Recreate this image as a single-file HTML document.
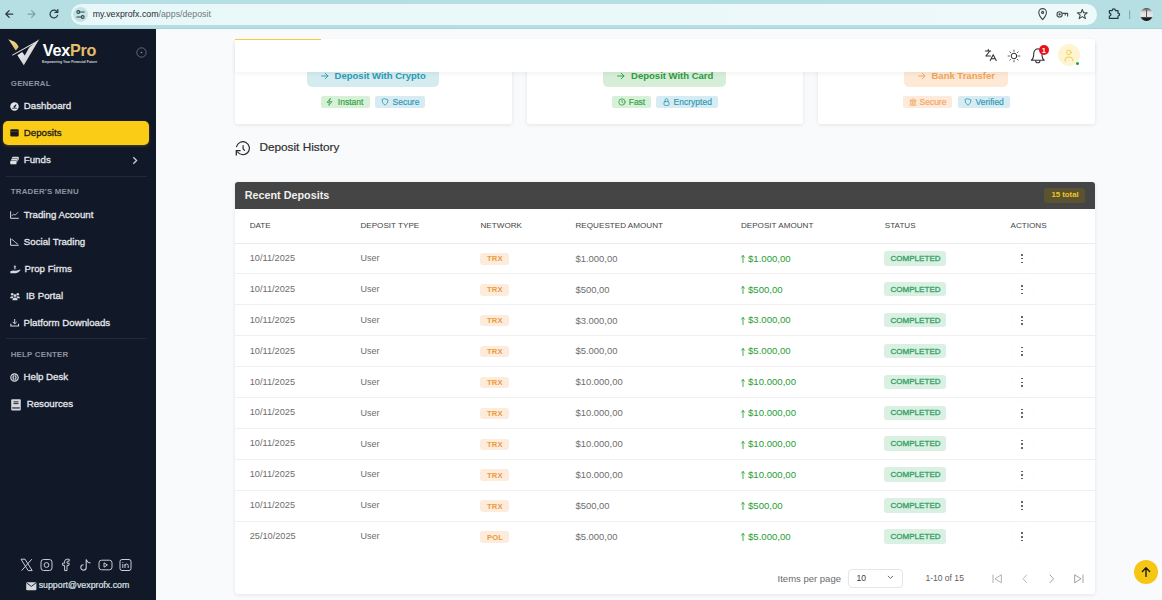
<!DOCTYPE html>
<html><head><meta charset="utf-8">
<style>
*{box-sizing:border-box;margin:0;padding:0}
html,body{width:1162px;height:600px;overflow:hidden;background:#f9fafc;font-family:"Liberation Sans",sans-serif;position:relative}
.abs{position:absolute}
.t{position:absolute;white-space:nowrap;line-height:1}
/* browser bar */
#bar{left:0;top:0;width:1162px;height:29px;background:#b6dfe3;border-bottom:1px solid #a9d3d8}
#pill{left:71px;top:4px;width:1026px;height:20.5px;border-radius:11px;background:linear-gradient(90deg,#e8f7f9,#eef9fa)}
/* sidebar */
#side{left:0;top:29px;width:156px;height:571px;background:#111827}
.sec{font-size:7.9px;font-weight:700;color:#8b93a0;letter-spacing:0.2px}
.nav{font-size:9.7px;color:#e5e7eb;-webkit-text-stroke:0.3px currentColor}
.div{left:6px;width:141px;height:1px;background:#212a3b}
/* main */
.card{background:#fff;border-radius:3px;box-shadow:0 1px 4px rgba(0,0,0,0.09)}
.btn{border-radius:5px;font-weight:700;font-size:9.5px}
.chip{height:12px;border-radius:2px;font-size:7.9px;font-weight:700}
.th{font-size:8.1px;color:#444;letter-spacing:0.1px}
.td{font-size:9.3px;color:#6b6b6b}
.net{height:12px;border-radius:3px;background:#fde9d6;color:#ee8a2e;font-size:8px;font-weight:700}
.cmp{height:14.5px;border-radius:3px;background:#d9f0e2;color:#2f9e60;font-size:7.9px;font-weight:700}
.grn{font-size:9.4px;color:#22a035}
.rowb{left:235px;width:860px;height:1px;background:#efefef}
</style></head><body>

<!-- Browser bar -->
<div id="bar" class="abs"></div>
<div id="pill" class="abs"></div>
<div class="abs" style="left:73px;top:7px;width:15px;height:15px;border-radius:50%;background:#c3e3e7"></div>

<svg class="abs" style="left:0;top:0" width="70" height="29" viewBox="0 0 70 29" fill="none" stroke-linecap="round" stroke-linejoin="round">
  <path d="M12.8 14 H5.8 M9.2 10.6 L5.8 14 L9.2 17.4" stroke="#2b3a3c" stroke-width="1.25"/>
  <path d="M28 14 H35 M31.6 10.6 L35 14 L31.6 17.4" stroke="#7fa3a7" stroke-width="1.25"/>
  <path d="M57.4 12.2 A3.9 3.9 0 1 0 57.6 15.4" stroke="#2b3a3c" stroke-width="1.25"/>
  <path d="M57.8 9.6 V12.4 H55" stroke="#2b3a3c" stroke-width="1.25"/>
</svg>
<svg class="abs" style="left:73px;top:7px" width="15" height="15" viewBox="0 0 15 15" fill="none" stroke="#2f4548" stroke-width="1.1" stroke-linecap="round">
  <circle cx="5.3" cy="5" r="1.4"/><path d="M7.4 5 H11.2"/>
  <path d="M3.8 10 H7.6"/><circle cx="9.7" cy="10" r="1.4"/>
</svg>
<svg class="abs" style="left:1034px;top:5px" width="130" height="20" viewBox="1034 5 130 20" fill="none" stroke="#3c4b4d" stroke-width="1.1" stroke-linejoin="round">
  <path d="M1042.6 19.6 Q1038.8 15.2 1038.8 12.4 A3.8 3.8 0 0 1 1046.4 12.4 Q1046.4 15.2 1042.6 19.6 Z"/><circle cx="1042.6" cy="12.4" r="1"/>
  <circle cx="1059.6" cy="14.4" r="2.6"/><circle cx="1059.6" cy="14.4" r="0.6" fill="#3c4b4d"/><path d="M1062.2 13.4 H1067.6 V16.6 M1065.2 13.4 V15.6"/>
  <path d="M1082.3 9.4 L1083.6 12.8 L1087.2 12.9 L1084.4 15.1 L1085.4 18.6 L1082.3 16.6 L1079.2 18.6 L1080.2 15.1 L1077.4 12.9 L1081 12.8 Z"/>
  <path d="M1109.4 10.6 H1112.2 Q1112.2 8.8 1113.8 8.8 Q1115.4 8.8 1115.4 10.6 H1118 V13.2 Q1119.6 13.2 1119.6 14.6 Q1119.6 16 1118 16 V18.4 H1109.4 V16 Q1111 16 1111 14.6 Q1111 13.2 1109.4 13.2 Z" stroke="#26383b" stroke-width="1.2"/>
  <path d="M1129.7 10.4 V19" stroke="#6fa9b0" stroke-width="1"/>
</svg>
<div class="abs" style="left:1140px;top:8px;width:13px;height:13px;border-radius:50%;background:linear-gradient(180deg,#3b3b3b 0%,#dcdcdc 30%,#e8e8e8 65%,#222 75%,#111 100%);overflow:hidden"><div class="abs" style="left:6px;top:2px;width:1.2px;height:8px;background:#555"></div></div>
<div class="t" style="left:92.7px;top:10px;font-size:8.8px;color:#1f2a2c">my.vexprofx.com<span style="color:#6d7a7c">/apps/deposit</span></div>

<!-- Sidebar -->
<div id="side" class="abs"></div>
<!-- Sidebar content -->
<svg class="abs" style="left:0;top:29px" width="156" height="50" viewBox="0 29 156 50">
  <defs>
    <linearGradient id="gold" x1="0" y1="0" x2="0" y2="1"><stop offset="0" stop-color="#f5df9c"/><stop offset="1" stop-color="#dcb865"/></linearGradient>
    <linearGradient id="silv" x1="0" y1="0" x2="1" y2="1"><stop offset="0" stop-color="#ffffff"/><stop offset="1" stop-color="#b9bcc4"/></linearGradient>
  </defs>
  <path d="M8.4 39.3 L14.6 41.8 Q17.6 44 18.7 47 L15.8 50.4 Q13.6 47.6 12.2 45 Z" fill="url(#gold)"/>
  <path d="M39.4 39.1 L23.8 65.3 L17.4 55.3 L22.2 52 L24.8 55.6 L29.2 47.6 Z" fill="url(#silv)"/>
  <path d="M11.8 55 L37.6 40.6 L38.2 41.4 L12.8 55.4 Z" fill="#d9dbe2"/>
  <path d="M39.4 39.1 L36 42.8 L37.6 40.8 Z" fill="#d5a94e"/>
</svg>
<div class="t" style="left:42.8px;top:41.6px;font-size:16.2px;font-weight:700;letter-spacing:-0.25px;color:#fff">Vex<span style="color:#e3bf6a">Pro</span></div>
<div class="t" style="left:42px;top:60.5px;font-size:3.35px;font-weight:700;color:#d6d8de;letter-spacing:0">Empowering Your Financial Future</div>
<svg class="abs" style="left:136px;top:47px" width="11" height="11" viewBox="0 0 11 11"><circle cx="5.5" cy="5.5" r="4.7" fill="none" stroke="#6b7280" stroke-width="0.9"/><circle cx="5.5" cy="5.5" r="0.8" fill="#8b92a0"/></svg>

<div class="t sec" style="left:10.8px;top:80.2px">GENERAL</div>
<svg class="abs" style="left:10px;top:102px" width="9" height="9" viewBox="0 0 9 9"><circle cx="4.5" cy="4.5" r="4.2" fill="#e5e7eb"/><path d="M4.5 4.7 L6.3 2.6" stroke="#111827" stroke-width="1.1"/><circle cx="4.5" cy="4.8" r="1" fill="#111827"/><path d="M2 6.3 h5" stroke="#111827" stroke-width="0.7"/></svg>
<div class="t nav" style="left:23.8px;top:101.3px">Dashboard</div>

<div class="abs" style="left:3px;top:121.3px;width:146px;height:23.4px;border-radius:5px;background:#facc15;box-shadow:0 1px 3px rgba(250,204,21,0.25)"></div>
<svg class="abs" style="left:10px;top:129px" width="9" height="8" viewBox="0 0 9 8"><rect x="0.3" y="0.3" width="8.4" height="7.2" rx="1.2" fill="#1a1a1a"/><rect x="0.3" y="2" width="8.4" height="0.8" fill="#5a4a10"/></svg>
<div class="t nav" style="left:23.8px;top:128.3px;color:#1b1b1b">Deposits</div>

<svg class="abs" style="left:10px;top:156px" width="9" height="9" viewBox="0 0 9 9"><rect x="2" y="0.8" width="6.8" height="3.6" rx="0.8" fill="#d6d8de"/><rect x="1" y="2.6" width="6.8" height="3.6" rx="0.8" fill="#e5e7eb" stroke="#111827" stroke-width="0.5"/><rect x="0" y="4.6" width="6.8" height="3.8" rx="0.8" fill="#e5e7eb" stroke="#111827" stroke-width="0.5"/></svg>
<div class="t nav" style="left:23.8px;top:155.3px">Funds</div>
<svg class="abs" style="left:132px;top:156px" width="6" height="9" viewBox="0 0 6 9"><path d="M1.3 1.2 L4.6 4.5 L1.3 7.8" fill="none" stroke="#c9ccd3" stroke-width="1.3"/></svg>

<div class="abs div" style="top:176.3px"></div>
<div class="t sec" style="left:10.8px;top:188.2px">TRADER&#39;S MENU</div>

<svg class="abs" style="left:9.5px;top:210.5px" width="9" height="8" viewBox="0 0 9 8"><path d="M0.6 0.3 V7.3 H8.8" fill="none" stroke="#d6d8de" stroke-width="1"/><path d="M1.8 5 L3.6 3 L5 4.2 L8.2 1.2" fill="none" stroke="#d6d8de" stroke-width="0.8"/></svg>
<div class="t nav" style="left:23.8px;top:209.5px">Trading Account</div>

<svg class="abs" style="left:9.5px;top:237.5px" width="9" height="8" viewBox="0 0 9 8"><path d="M0.6 0.3 V7.3 H8.8" fill="none" stroke="#d6d8de" stroke-width="1"/><path d="M1.6 1.5 L3.2 2.2 L5.8 4.8 L7.8 6" fill="none" stroke="#d6d8de" stroke-width="0.9"/></svg>
<div class="t nav" style="left:23.8px;top:236.8px">Social Trading</div>

<svg class="abs" style="left:9.5px;top:264.5px" width="11" height="9" viewBox="0 0 11 9"><path d="M0.2 6.4 Q2.5 5.2 5 5.8 L7.2 5.6 Q8.8 5 10.2 4.4 L10.4 5.2 Q8.6 7.5 6 8.3 L0.4 8.3 Z" fill="#d6d8de"/><path d="M4.8 0.4 V4.4" stroke="#d6d8de" stroke-width="0.9"/><path d="M3.6 1.8 Q4.8 0.8 6 1.6 Q4 2.6 5.8 3.5" fill="none" stroke="#d6d8de" stroke-width="0.6"/></svg>
<div class="t nav" style="left:24.5px;top:263.8px">Prop Firms</div>

<svg class="abs" style="left:10.4px;top:291.6px" width="10" height="9" viewBox="0 0 10 9"><circle cx="2.2" cy="2.2" r="1.3" fill="#d6d8de"/><circle cx="7.8" cy="2.2" r="1.3" fill="#d6d8de"/><circle cx="5" cy="3.6" r="1.4" fill="#d6d8de"/><path d="M0 6.2 Q0 4.2 2.2 4.2 Q3.3 4.2 3.6 4.8 L2.8 6.2 Z" fill="#d6d8de"/><path d="M10 6.2 Q10 4.2 7.8 4.2 Q6.7 4.2 6.4 4.8 L7.2 6.2 Z" fill="#d6d8de"/><path d="M2.4 8.3 Q2.4 5.4 5 5.4 Q7.6 5.4 7.6 8.3 Z" fill="#d6d8de"/></svg>
<div class="t nav" style="left:25.9px;top:290.8px">IB Portal</div>

<svg class="abs" style="left:9.7px;top:319px" width="10" height="8" viewBox="0 0 10 8"><path d="M4.7 0 V4.6" stroke="#d6d8de" stroke-width="1"/><path d="M2.6 2.8 L4.7 4.9 L6.8 2.8" fill="none" stroke="#d6d8de" stroke-width="1"/><path d="M0.3 4.8 L0.3 7.6 L9.1 7.6 L9.1 4.8 L8 4.8 L8 6.4 L1.4 6.4 L1.4 4.8 Z" fill="#d6d8de"/></svg>
<div class="t nav" style="left:23.5px;top:318px">Platform Downloads</div>

<div class="abs div" style="top:338.3px"></div>
<div class="t sec" style="left:10.7px;top:350.6px">HELP CENTER</div>

<svg class="abs" style="left:10px;top:373px" width="9" height="9" viewBox="0 0 9 9"><circle cx="4.5" cy="4.5" r="3.7" fill="none" stroke="#d6d8de" stroke-width="1.2"/><circle cx="4.5" cy="4.5" r="1.6" fill="none" stroke="#d6d8de" stroke-width="0.9"/><path d="M3.2 1 V8 M5.8 1 V8" stroke="#d6d8de" stroke-width="0.8"/></svg>
<div class="t nav" style="left:23.5px;top:372.3px">Help Desk</div>

<svg class="abs" style="left:11px;top:398.5px" width="10" height="12" viewBox="0 0 10 12"><rect x="0.2" y="0.2" width="9.6" height="11.2" rx="1" fill="#d6d8de"/><rect x="2.5" y="2.4" width="5" height="0.9" fill="#111827"/><rect x="2.5" y="4.2" width="5" height="0.9" fill="#111827"/><rect x="1.2" y="8.4" width="7.6" height="1.1" fill="#111827"/></svg>
<div class="t nav" style="left:26.7px;top:399px">Resources</div>

<!-- social -->
<svg class="abs" style="left:20px;top:558px" width="115" height="14" viewBox="0 0 115 14" fill="none" stroke="#c9ccd3" stroke-width="1">
  <path d="M1 1.2 L5 1.2 L12.2 12.6 L8.2 12.6 Z"/><path d="M11.8 1.2 L1.6 12.6"/>
  <rect x="21" y="1.5" width="11" height="11" rx="2.6"/><circle cx="26.5" cy="7" r="2.4"/>
  <path d="M47.5 1.2 Q45 1 44.6 3.2 L44.6 5.2 L42.6 5.2 L42.6 7.4 L44.6 7.4 L44.6 12.6 L47 12.6 L47 7.4 L48.9 7.4 L49.2 5.2 L47 5.2 L47 3.8 Q47 3.2 47.8 3.2 L49.2 3.2 L49.2 1.2 Z"/>
  <path d="M66.2 1.4 V9.4 A2.7 2.7 0 1 1 63.5 6.7" stroke-width="1.1"/><path d="M66.2 1.6 Q67 4.6 70.4 4.9" stroke-width="1.1"/>
  <rect x="79" y="2.2" width="13" height="9.6" rx="2.6"/><path d="M84 4.8 L87.4 7 L84 9.2 Z"/>
  <rect x="100" y="1.5" width="11" height="11" rx="2"/><path d="M102.8 6 V10 M102.8 4 V4.8 M105 10 V6 M105 7.6 Q105 6 106.6 6 Q108.2 6 108.2 7.6 V10"/>
</svg>
<svg class="abs" style="left:25.5px;top:581.5px" width="11" height="9" viewBox="0 0 11 9"><rect x="0.2" y="0.2" width="10.2" height="8" rx="1" fill="#d6d8de"/><path d="M0.4 0.8 L5.3 4.4 L10.2 0.8" fill="none" stroke="#111827" stroke-width="0.9"/></svg>
<div class="t" style="left:38.7px;top:581.2px;font-size:8.8px;color:#dfe2e7;-webkit-text-stroke:0.2px #dfe2e7">support@vexprofx.com</div>


<!-- Cards -->
<div class="abs card" style="left:235px;top:40px;width:277px;height:84px"></div>
<div class="abs card" style="left:527px;top:40px;width:276px;height:84px"></div>
<div class="abs card" style="left:818px;top:40px;width:277px;height:84px"></div>

<div class="abs" style="left:307.2px;top:60.7px;width:131.6px;height:26.0px;background:#d4ecf0;border-radius:5px"></div>
<svg class="abs" style="left:321px;top:71.5px" width="8" height="8" viewBox="0 0 8 8"><path d="M0.6 4 H7 M4.2 1.2 L7 4 L4.2 6.8" fill="none" stroke="#2b9bb2" stroke-width="0.9" stroke-linecap="round" stroke-linejoin="round"/></svg>
<div class="t" style="left:334.6px;top:70.86px;font-size:9.5px;font-weight:700;color:#2b9bb2;">Deposit With Crypto</div>
<div class="abs" style="left:603.2px;top:60.7px;width:122.9px;height:26.0px;background:#d6eed8;border-radius:5px"></div>
<svg class="abs" style="left:617.3px;top:71.5px" width="8" height="8" viewBox="0 0 8 8"><path d="M0.6 4 H7 M4.2 1.2 L7 4 L4.2 6.8" fill="none" stroke="#2e9a3e" stroke-width="0.9" stroke-linecap="round" stroke-linejoin="round"/></svg>
<div class="t" style="left:631.1px;top:70.86px;font-size:9.5px;font-weight:700;color:#2e9a3e;">Deposit With Card</div>
<div class="abs" style="left:904.0px;top:60.7px;width:104.4px;height:26.0px;background:#fde9d5;border-radius:5px"></div>
<svg class="abs" style="left:918px;top:71.5px" width="8" height="8" viewBox="0 0 8 8"><path d="M0.6 4 H7 M4.2 1.2 L7 4 L4.2 6.8" fill="none" stroke="#f1a45a" stroke-width="0.9" stroke-linecap="round" stroke-linejoin="round"/></svg>
<div class="t" style="left:931.5px;top:70.86px;font-size:9.5px;font-weight:700;color:#f1a45a;">Bank Transfer</div>
<div class="abs" style="left:321.0px;top:96.1px;width:48.7px;height:11.8px;background:#d7f1d9;border-radius:2px"></div>
<svg class="abs" style="left:326px;top:98px" width="7" height="8" viewBox="0 0 7 8" fill="none" stroke="#2f9d40" stroke-width="0.8" stroke-linecap="round" stroke-linejoin="round"><path d="M4.2 0.6 L1 4.4 H3.4 L2.8 7.4 L6 3.6 H3.6 Z"/></svg>
<div class="t" style="left:337.8px;top:97.60px;font-size:8.5px;font-weight:400;color:#2f9d40;-webkit-text-stroke:0.15px #2f9d40">Instant</div>
<div class="abs" style="left:375.2px;top:96.1px;width:49.8px;height:11.8px;background:#d7ecf2;border-radius:2px"></div>
<svg class="abs" style="left:380.5px;top:98px" width="8" height="8" viewBox="0 0 8 8" fill="none" stroke="#2d97b2" stroke-width="0.8" stroke-linecap="round" stroke-linejoin="round"><path d="M4 0.8 L7 1.8 Q7.2 5.6 4 7.2 Q0.8 5.6 1 1.8 Z"/></svg>
<div class="t" style="left:392.5px;top:97.60px;font-size:8.5px;font-weight:400;color:#2d97b2;-webkit-text-stroke:0.15px #2d97b2">Secure</div>
<div class="abs" style="left:611.6px;top:96.1px;width:39.1px;height:11.8px;background:#d7f1d9;border-radius:2px"></div>
<svg class="abs" style="left:617.6px;top:98px" width="8" height="8" viewBox="0 0 8 8" fill="none" stroke="#2f9d40" stroke-width="0.8" stroke-linecap="round" stroke-linejoin="round"><circle cx="4" cy="4" r="3.2"/><path d="M4 2.2 V4 L5.2 5"/></svg>
<div class="t" style="left:628.7px;top:97.60px;font-size:8.5px;font-weight:400;color:#2f9d40;-webkit-text-stroke:0.15px #2f9d40">Fast</div>
<div class="abs" style="left:656.2px;top:96.1px;width:61.7px;height:11.8px;background:#d7ecf2;border-radius:2px"></div>
<svg class="abs" style="left:662.5px;top:97.6px" width="7" height="8" viewBox="0 0 7 8" fill="none" stroke="#2d97b2" stroke-width="0.8" stroke-linecap="round" stroke-linejoin="round"><rect x="1" y="3.6" width="5" height="3.8" rx="0.8"/><path d="M2 3.6 V2.4 Q2 0.7 3.5 0.7 Q5 0.7 5 2.4 V3.6"/></svg>
<div class="t" style="left:673.6px;top:97.60px;font-size:8.5px;font-weight:400;color:#2d97b2;-webkit-text-stroke:0.15px #2d97b2">Encrypted</div>
<div class="abs" style="left:902.7px;top:96.1px;width:49.3px;height:11.8px;background:#fdeadb;border-radius:2px"></div>
<svg class="abs" style="left:908.5px;top:97.8px" width="8" height="8" viewBox="0 0 8 8" fill="none" stroke="#f0a45e" stroke-width="0.8" stroke-linecap="round" stroke-linejoin="round"><path d="M1 2.6 L4 0.8 L7 2.6 Z M1 7.2 H7 M1.8 3.2 V6.4 M3.3 3.2 V6.4 M4.8 3.2 V6.4 M6.2 3.2 V6.4"/></svg>
<div class="t" style="left:919.5px;top:97.60px;font-size:8.5px;font-weight:400;color:#f0a45e;-webkit-text-stroke:0.15px #f0a45e">Secure</div>
<div class="abs" style="left:957.8px;top:96.1px;width:52.2px;height:11.8px;background:#d7ecf2;border-radius:2px"></div>
<svg class="abs" style="left:963.5px;top:98px" width="8" height="8" viewBox="0 0 8 8" fill="none" stroke="#2d97b2" stroke-width="0.8" stroke-linecap="round" stroke-linejoin="round"><path d="M4 0.8 L7 1.8 Q7.2 5.6 4 7.2 Q0.8 5.6 1 1.8 Z"/></svg>
<div class="t" style="left:975.5px;top:97.60px;font-size:8.5px;font-weight:400;color:#2d97b2;-webkit-text-stroke:0.15px #2d97b2">Verified</div>

<div class="abs" style="left:235px;top:39.2px;width:860px;height:32.8px;background:rgba(255,255,255,0.97);border-radius:3px 3px 0 0;box-shadow:0 2px 4px rgba(0,0,0,0.05)"></div>
<div class="abs" style="left:235.0px;top:38.6px;width:86.0px;height:1.5px;background:#f2cd3a;"></div>
<svg class="abs" style="left:984px;top:49px" width="14" height="13" viewBox="0 0 14 13" fill="none" stroke="#2f2f2f" stroke-width="0.8" stroke-linecap="round" stroke-linejoin="round"><path d="M1.3 2 H6.7 M4.3 0.4 V2 M5.6 2.3 L1.9 7 H6.4" stroke-width="1.05"/><path d="M6.2 11.6 L9.2 5.8 L12.2 11.6 M7.2 9.7 H11.2" stroke-width="1.05"/></svg>
<svg class="abs" style="left:1007.2px;top:48.5px" width="14" height="14" viewBox="0 0 14 14" fill="none" stroke="#2f2f2f" stroke-width="0.8" stroke-linecap="round" stroke-linejoin="round"><circle stroke-width="1" cx="7" cy="7" r="2.8"/><path d="M11.60 7.00 L12.90 7.00"/><path d="M10.25 10.25 L11.17 11.17"/><path d="M7.00 11.60 L7.00 12.90"/><path d="M3.75 10.25 L2.83 11.17"/><path d="M2.40 7.00 L1.10 7.00"/><path d="M3.75 3.75 L2.83 2.83"/><path d="M7.00 2.40 L7.00 1.10"/><path d="M10.25 3.75 L11.17 2.83"/></svg>
<svg class="abs" style="left:1030px;top:47px" width="16" height="17" viewBox="0 0 16 17" fill="none" stroke="#333" stroke-width="0.8" stroke-linecap="round" stroke-linejoin="round"><path d="M1.4 13.3 Q3.4 11.8 3.6 8.6 L3.7 6.8 Q4 2.2 7.8 1.7 Q11.6 2.2 11.9 6.8 L12 8.6 Q12.2 11.8 14.2 13.3 Z" stroke-width="1.1"/><path d="M5.7 13.7 A2.1 2.1 0 0 0 9.9 13.7" stroke-width="1.1"/></svg>
<div class="abs" style="left:1038.7px;top:44.9px;width:10.6px;height:10.6px;border-radius:50%;background:#e8121c"></div>
<div class="t" style="left:1041.8px;top:46.97px;font-size:7.6px;font-weight:700;color:#fff;">1</div>
<div class="abs" style="left:1058px;top:44px;width:22px;height:22px;border-radius:50%;background:#fdf5d2"></div>
<svg class="abs" style="left:1062px;top:48px" width="14" height="14" viewBox="0 0 14 14" fill="none" stroke="#f1cb3c" stroke-width="0.9" stroke-linecap="round" stroke-linejoin="round"><circle cx="6.9" cy="4.4" r="2.2"/><path d="M3 13 V12 Q3 8.9 6.9 8.9 Q10.8 8.9 10.8 12 V13"/></svg>
<div class="abs" style="left:1075.6px;top:61.8px;width:3.6px;height:3.6px;border-radius:50%;background:#16a34a"></div>

<svg class="abs" style="left:235.2px;top:140.9px" width="16" height="16" viewBox="0 0 16 16" fill="none" stroke="#2b2b2b" stroke-width="0.8" stroke-linecap="round" stroke-linejoin="round"><path d="M1.6 5.6 A6.5 6.5 0 1 1 2.6 11" stroke-width="1.2"/><path d="M1.3 9.7 H4.9 M1.3 9.7 V13.9" stroke-width="1.3" stroke-linecap="square"/><path d="M8.1 4.6 V7.9 L9.6 9.4" stroke-width="1.2"/></svg>
<div class="t" style="left:259.4px;top:141.61px;font-size:11.8px;font-weight:400;color:#2f2f2f;-webkit-text-stroke:0.2px #2f2f2f">Deposit History</div>
<div class="abs card" style="left:235px;top:181.6px;width:860px;height:412.4px"></div>
<div class="abs" style="left:235px;top:181.6px;width:860px;height:27.2px;background:#454545;border-radius:3px 3px 0 0"></div>
<div class="t" style="left:244.7px;top:189.86px;font-size:10.8px;font-weight:700;color:#efefef;">Recent Deposits</div>
<div class="abs" style="left:1044.0px;top:188.2px;width:40.7px;height:14.7px;background:#5b5330;border-radius:3px"></div>
<div class="t" style="left:1051.4px;top:191.30px;font-size:7.8px;font-weight:700;color:#ecc526;">15 total</div>
<div class="t" style="left:249.7px;top:222.14px;font-size:8.1px;font-weight:400;color:#444;letter-spacing:0.02px">DATE</div>
<div class="t" style="left:360.4px;top:222.14px;font-size:8.1px;font-weight:400;color:#444;letter-spacing:0.02px">DEPOSIT TYPE</div>
<div class="t" style="left:480.5px;top:222.14px;font-size:8.1px;font-weight:400;color:#444;letter-spacing:0.02px">NETWORK</div>
<div class="t" style="left:575.5px;top:222.14px;font-size:8.1px;font-weight:400;color:#444;letter-spacing:0.02px">REQUESTED AMOUNT</div>
<div class="t" style="left:740.9px;top:222.14px;font-size:8.1px;font-weight:400;color:#444;letter-spacing:0.02px">DEPOSIT AMOUNT</div>
<div class="t" style="left:884.8px;top:222.14px;font-size:8.1px;font-weight:400;color:#444;letter-spacing:0.02px">STATUS</div>
<div class="t" style="left:1010.5px;top:222.14px;font-size:8.1px;font-weight:400;color:#444;letter-spacing:0.02px">ACTIONS</div>
<div class="abs" style="left:235.0px;top:243.0px;width:860.0px;height:1.0px;background:#ebebeb;"></div>
<div class="t" style="left:249.7px;top:253.96px;font-size:9.2px;font-weight:400;color:#6e6e6e;">10/11/2025</div>
<div class="t" style="left:360.4px;top:254.13px;font-size:9.0px;font-weight:400;color:#6e6e6e;">User</div>
<div class="abs" style="left:480.0px;top:253.1px;width:28.5px;height:11.6px;background:#fdecdc;border-radius:3px"></div>
<div class="t" style="left:486.9px;top:255.42px;font-size:7.6px;font-weight:700;color:#ec9a40;letter-spacing:0.25px">TRX</div>
<div class="t" style="left:575.5px;top:253.75px;font-size:9.45px;font-weight:400;color:#6e6e6e;">$1.000,00</div>
<svg class="abs" style="left:739.8px;top:254.14999999999998px" width="6" height="10" viewBox="0 0 6 10" fill="none" stroke="#1f9e33" stroke-width="0.8" stroke-linecap="round" stroke-linejoin="round"><path d="M3 8.6 V1.6 M1.6 3.2 L3 1.5 L4.4 3.2" stroke-width="0.85"/></svg>
<div class="t" style="left:748.0px;top:253.62px;font-size:9.6px;font-weight:400;color:#1f9e33;">$1.000,00</div>
<div class="abs" style="left:884.3px;top:251.0px;width:61.5px;height:14.5px;background:#d9f0e2;border-radius:3px"></div>
<div class="t" style="left:890.4px;top:254.88px;font-size:8.0px;font-weight:400;color:#34a065;-webkit-text-stroke:0.3px #34a065;letter-spacing:0.05px">COMPLETED</div>
<div class="abs" style="left:1011px;top:247.9px;width:22px;height:22px;border-radius:50%;background:#fff;box-shadow:0 0 2px rgba(0,0,0,0.035)"></div>
<div class="abs" style="left:1021.2px;top:254.2px;width:1.6px;height:1.6px;border-radius:50%;background:#4a4a4a"></div>
<div class="abs" style="left:1021.2px;top:257.9px;width:1.6px;height:1.6px;border-radius:50%;background:#4a4a4a"></div>
<div class="abs" style="left:1021.2px;top:261.6px;width:1.6px;height:1.6px;border-radius:50%;background:#4a4a4a"></div>
<div class="abs" style="left:235.0px;top:273.0px;width:860.0px;height:1.0px;background:#f0f0f0;"></div>
<div class="t" style="left:249.7px;top:284.86px;font-size:9.2px;font-weight:400;color:#6e6e6e;">10/11/2025</div>
<div class="t" style="left:360.4px;top:285.03px;font-size:9.0px;font-weight:400;color:#6e6e6e;">User</div>
<div class="abs" style="left:480.0px;top:284.0px;width:28.5px;height:11.6px;background:#fdecdc;border-radius:3px"></div>
<div class="t" style="left:486.9px;top:286.32px;font-size:7.6px;font-weight:700;color:#ec9a40;letter-spacing:0.25px">TRX</div>
<div class="t" style="left:575.5px;top:284.65px;font-size:9.45px;font-weight:400;color:#6e6e6e;">$500,00</div>
<svg class="abs" style="left:739.8px;top:285.04999999999995px" width="6" height="10" viewBox="0 0 6 10" fill="none" stroke="#1f9e33" stroke-width="0.8" stroke-linecap="round" stroke-linejoin="round"><path d="M3 8.6 V1.6 M1.6 3.2 L3 1.5 L4.4 3.2" stroke-width="0.85"/></svg>
<div class="t" style="left:748.0px;top:284.52px;font-size:9.6px;font-weight:400;color:#1f9e33;">$500,00</div>
<div class="abs" style="left:884.3px;top:281.9px;width:61.5px;height:14.5px;background:#d9f0e2;border-radius:3px"></div>
<div class="t" style="left:890.4px;top:285.78px;font-size:8.0px;font-weight:400;color:#34a065;-webkit-text-stroke:0.3px #34a065;letter-spacing:0.05px">COMPLETED</div>
<div class="abs" style="left:1011px;top:278.8px;width:22px;height:22px;border-radius:50%;background:#fff;box-shadow:0 0 2px rgba(0,0,0,0.035)"></div>
<div class="abs" style="left:1021.2px;top:285.1px;width:1.6px;height:1.6px;border-radius:50%;background:#4a4a4a"></div>
<div class="abs" style="left:1021.2px;top:288.8px;width:1.6px;height:1.6px;border-radius:50%;background:#4a4a4a"></div>
<div class="abs" style="left:1021.2px;top:292.5px;width:1.6px;height:1.6px;border-radius:50%;background:#4a4a4a"></div>
<div class="abs" style="left:235.0px;top:304.0px;width:860.0px;height:1.0px;background:#f0f0f0;"></div>
<div class="t" style="left:249.7px;top:315.76px;font-size:9.2px;font-weight:400;color:#6e6e6e;">10/11/2025</div>
<div class="t" style="left:360.4px;top:315.93px;font-size:9.0px;font-weight:400;color:#6e6e6e;">User</div>
<div class="abs" style="left:480.0px;top:314.9px;width:28.5px;height:11.6px;background:#fdecdc;border-radius:3px"></div>
<div class="t" style="left:486.9px;top:317.22px;font-size:7.6px;font-weight:700;color:#ec9a40;letter-spacing:0.25px">TRX</div>
<div class="t" style="left:575.5px;top:315.55px;font-size:9.45px;font-weight:400;color:#6e6e6e;">$3.000,00</div>
<svg class="abs" style="left:739.8px;top:315.95px" width="6" height="10" viewBox="0 0 6 10" fill="none" stroke="#1f9e33" stroke-width="0.8" stroke-linecap="round" stroke-linejoin="round"><path d="M3 8.6 V1.6 M1.6 3.2 L3 1.5 L4.4 3.2" stroke-width="0.85"/></svg>
<div class="t" style="left:748.0px;top:315.42px;font-size:9.6px;font-weight:400;color:#1f9e33;">$3.000,00</div>
<div class="abs" style="left:884.3px;top:312.9px;width:61.5px;height:14.5px;background:#d9f0e2;border-radius:3px"></div>
<div class="t" style="left:890.4px;top:316.68px;font-size:8.0px;font-weight:400;color:#34a065;-webkit-text-stroke:0.3px #34a065;letter-spacing:0.05px">COMPLETED</div>
<div class="abs" style="left:1011px;top:309.8px;width:22px;height:22px;border-radius:50%;background:#fff;box-shadow:0 0 2px rgba(0,0,0,0.035)"></div>
<div class="abs" style="left:1021.2px;top:316.0px;width:1.6px;height:1.6px;border-radius:50%;background:#4a4a4a"></div>
<div class="abs" style="left:1021.2px;top:319.7px;width:1.6px;height:1.6px;border-radius:50%;background:#4a4a4a"></div>
<div class="abs" style="left:1021.2px;top:323.4px;width:1.6px;height:1.6px;border-radius:50%;background:#4a4a4a"></div>
<div class="abs" style="left:235.0px;top:335.0px;width:860.0px;height:1.0px;background:#f0f0f0;"></div>
<div class="t" style="left:249.7px;top:346.66px;font-size:9.2px;font-weight:400;color:#6e6e6e;">10/11/2025</div>
<div class="t" style="left:360.4px;top:346.83px;font-size:9.0px;font-weight:400;color:#6e6e6e;">User</div>
<div class="abs" style="left:480.0px;top:345.8px;width:28.5px;height:11.6px;background:#fdecdc;border-radius:3px"></div>
<div class="t" style="left:486.9px;top:348.12px;font-size:7.6px;font-weight:700;color:#ec9a40;letter-spacing:0.25px">TRX</div>
<div class="t" style="left:575.5px;top:346.45px;font-size:9.45px;font-weight:400;color:#6e6e6e;">$5.000,00</div>
<svg class="abs" style="left:739.8px;top:346.84999999999997px" width="6" height="10" viewBox="0 0 6 10" fill="none" stroke="#1f9e33" stroke-width="0.8" stroke-linecap="round" stroke-linejoin="round"><path d="M3 8.6 V1.6 M1.6 3.2 L3 1.5 L4.4 3.2" stroke-width="0.85"/></svg>
<div class="t" style="left:748.0px;top:346.32px;font-size:9.6px;font-weight:400;color:#1f9e33;">$5.000,00</div>
<div class="abs" style="left:884.3px;top:343.8px;width:61.5px;height:14.5px;background:#d9f0e2;border-radius:3px"></div>
<div class="t" style="left:890.4px;top:347.58px;font-size:8.0px;font-weight:400;color:#34a065;-webkit-text-stroke:0.3px #34a065;letter-spacing:0.05px">COMPLETED</div>
<div class="abs" style="left:1011px;top:340.6px;width:22px;height:22px;border-radius:50%;background:#fff;box-shadow:0 0 2px rgba(0,0,0,0.035)"></div>
<div class="abs" style="left:1021.2px;top:346.9px;width:1.6px;height:1.6px;border-radius:50%;background:#4a4a4a"></div>
<div class="abs" style="left:1021.2px;top:350.6px;width:1.6px;height:1.6px;border-radius:50%;background:#4a4a4a"></div>
<div class="abs" style="left:1021.2px;top:354.3px;width:1.6px;height:1.6px;border-radius:50%;background:#4a4a4a"></div>
<div class="abs" style="left:235.0px;top:366.0px;width:860.0px;height:1.0px;background:#f0f0f0;"></div>
<div class="t" style="left:249.7px;top:377.56px;font-size:9.2px;font-weight:400;color:#6e6e6e;">10/11/2025</div>
<div class="t" style="left:360.4px;top:377.73px;font-size:9.0px;font-weight:400;color:#6e6e6e;">User</div>
<div class="abs" style="left:480.0px;top:376.8px;width:28.5px;height:11.6px;background:#fdecdc;border-radius:3px"></div>
<div class="t" style="left:486.9px;top:379.02px;font-size:7.6px;font-weight:700;color:#ec9a40;letter-spacing:0.25px">TRX</div>
<div class="t" style="left:575.5px;top:377.35px;font-size:9.45px;font-weight:400;color:#6e6e6e;">$10.000,00</div>
<svg class="abs" style="left:739.8px;top:377.75px" width="6" height="10" viewBox="0 0 6 10" fill="none" stroke="#1f9e33" stroke-width="0.8" stroke-linecap="round" stroke-linejoin="round"><path d="M3 8.6 V1.6 M1.6 3.2 L3 1.5 L4.4 3.2" stroke-width="0.85"/></svg>
<div class="t" style="left:748.0px;top:377.22px;font-size:9.6px;font-weight:400;color:#1f9e33;">$10.000,00</div>
<div class="abs" style="left:884.3px;top:374.7px;width:61.5px;height:14.5px;background:#d9f0e2;border-radius:3px"></div>
<div class="t" style="left:890.4px;top:378.48px;font-size:8.0px;font-weight:400;color:#34a065;-webkit-text-stroke:0.3px #34a065;letter-spacing:0.05px">COMPLETED</div>
<div class="abs" style="left:1011px;top:371.6px;width:22px;height:22px;border-radius:50%;background:#fff;box-shadow:0 0 2px rgba(0,0,0,0.035)"></div>
<div class="abs" style="left:1021.2px;top:377.8px;width:1.6px;height:1.6px;border-radius:50%;background:#4a4a4a"></div>
<div class="abs" style="left:1021.2px;top:381.5px;width:1.6px;height:1.6px;border-radius:50%;background:#4a4a4a"></div>
<div class="abs" style="left:1021.2px;top:385.2px;width:1.6px;height:1.6px;border-radius:50%;background:#4a4a4a"></div>
<div class="abs" style="left:235.0px;top:397.0px;width:860.0px;height:1.0px;background:#f0f0f0;"></div>
<div class="t" style="left:249.7px;top:408.46px;font-size:9.2px;font-weight:400;color:#6e6e6e;">10/11/2025</div>
<div class="t" style="left:360.4px;top:408.63px;font-size:9.0px;font-weight:400;color:#6e6e6e;">User</div>
<div class="abs" style="left:480.0px;top:407.6px;width:28.5px;height:11.6px;background:#fdecdc;border-radius:3px"></div>
<div class="t" style="left:486.9px;top:409.92px;font-size:7.6px;font-weight:700;color:#ec9a40;letter-spacing:0.25px">TRX</div>
<div class="t" style="left:575.5px;top:408.25px;font-size:9.45px;font-weight:400;color:#6e6e6e;">$10.000,00</div>
<svg class="abs" style="left:739.8px;top:408.65px" width="6" height="10" viewBox="0 0 6 10" fill="none" stroke="#1f9e33" stroke-width="0.8" stroke-linecap="round" stroke-linejoin="round"><path d="M3 8.6 V1.6 M1.6 3.2 L3 1.5 L4.4 3.2" stroke-width="0.85"/></svg>
<div class="t" style="left:748.0px;top:408.12px;font-size:9.6px;font-weight:400;color:#1f9e33;">$10.000,00</div>
<div class="abs" style="left:884.3px;top:405.6px;width:61.5px;height:14.5px;background:#d9f0e2;border-radius:3px"></div>
<div class="t" style="left:890.4px;top:409.38px;font-size:8.0px;font-weight:400;color:#34a065;-webkit-text-stroke:0.3px #34a065;letter-spacing:0.05px">COMPLETED</div>
<div class="abs" style="left:1011px;top:402.4px;width:22px;height:22px;border-radius:50%;background:#fff;box-shadow:0 0 2px rgba(0,0,0,0.035)"></div>
<div class="abs" style="left:1021.2px;top:408.7px;width:1.6px;height:1.6px;border-radius:50%;background:#4a4a4a"></div>
<div class="abs" style="left:1021.2px;top:412.4px;width:1.6px;height:1.6px;border-radius:50%;background:#4a4a4a"></div>
<div class="abs" style="left:1021.2px;top:416.1px;width:1.6px;height:1.6px;border-radius:50%;background:#4a4a4a"></div>
<div class="abs" style="left:235.0px;top:428.0px;width:860.0px;height:1.0px;background:#f0f0f0;"></div>
<div class="t" style="left:249.7px;top:439.36px;font-size:9.2px;font-weight:400;color:#6e6e6e;">10/11/2025</div>
<div class="t" style="left:360.4px;top:439.53px;font-size:9.0px;font-weight:400;color:#6e6e6e;">User</div>
<div class="abs" style="left:480.0px;top:438.5px;width:28.5px;height:11.6px;background:#fdecdc;border-radius:3px"></div>
<div class="t" style="left:486.9px;top:440.82px;font-size:7.6px;font-weight:700;color:#ec9a40;letter-spacing:0.25px">TRX</div>
<div class="t" style="left:575.5px;top:439.15px;font-size:9.45px;font-weight:400;color:#6e6e6e;">$10.000,00</div>
<svg class="abs" style="left:739.8px;top:439.54999999999995px" width="6" height="10" viewBox="0 0 6 10" fill="none" stroke="#1f9e33" stroke-width="0.8" stroke-linecap="round" stroke-linejoin="round"><path d="M3 8.6 V1.6 M1.6 3.2 L3 1.5 L4.4 3.2" stroke-width="0.85"/></svg>
<div class="t" style="left:748.0px;top:439.02px;font-size:9.6px;font-weight:400;color:#1f9e33;">$10.000,00</div>
<div class="abs" style="left:884.3px;top:436.4px;width:61.5px;height:14.5px;background:#d9f0e2;border-radius:3px"></div>
<div class="t" style="left:890.4px;top:440.28px;font-size:8.0px;font-weight:400;color:#34a065;-webkit-text-stroke:0.3px #34a065;letter-spacing:0.05px">COMPLETED</div>
<div class="abs" style="left:1011px;top:433.3px;width:22px;height:22px;border-radius:50%;background:#fff;box-shadow:0 0 2px rgba(0,0,0,0.035)"></div>
<div class="abs" style="left:1021.2px;top:439.6px;width:1.6px;height:1.6px;border-radius:50%;background:#4a4a4a"></div>
<div class="abs" style="left:1021.2px;top:443.3px;width:1.6px;height:1.6px;border-radius:50%;background:#4a4a4a"></div>
<div class="abs" style="left:1021.2px;top:447.0px;width:1.6px;height:1.6px;border-radius:50%;background:#4a4a4a"></div>
<div class="abs" style="left:235.0px;top:459.0px;width:860.0px;height:1.0px;background:#f0f0f0;"></div>
<div class="t" style="left:249.7px;top:470.26px;font-size:9.2px;font-weight:400;color:#6e6e6e;">10/11/2025</div>
<div class="t" style="left:360.4px;top:470.43px;font-size:9.0px;font-weight:400;color:#6e6e6e;">User</div>
<div class="abs" style="left:480.0px;top:469.4px;width:28.5px;height:11.6px;background:#fdecdc;border-radius:3px"></div>
<div class="t" style="left:486.9px;top:471.72px;font-size:7.6px;font-weight:700;color:#ec9a40;letter-spacing:0.25px">TRX</div>
<div class="t" style="left:575.5px;top:470.05px;font-size:9.45px;font-weight:400;color:#6e6e6e;">$10.000,00</div>
<svg class="abs" style="left:739.8px;top:470.44999999999993px" width="6" height="10" viewBox="0 0 6 10" fill="none" stroke="#1f9e33" stroke-width="0.8" stroke-linecap="round" stroke-linejoin="round"><path d="M3 8.6 V1.6 M1.6 3.2 L3 1.5 L4.4 3.2" stroke-width="0.85"/></svg>
<div class="t" style="left:748.0px;top:469.92px;font-size:9.6px;font-weight:400;color:#1f9e33;">$10.000,00</div>
<div class="abs" style="left:884.3px;top:467.3px;width:61.5px;height:14.5px;background:#d9f0e2;border-radius:3px"></div>
<div class="t" style="left:890.4px;top:471.18px;font-size:8.0px;font-weight:400;color:#34a065;-webkit-text-stroke:0.3px #34a065;letter-spacing:0.05px">COMPLETED</div>
<div class="abs" style="left:1011px;top:464.2px;width:22px;height:22px;border-radius:50%;background:#fff;box-shadow:0 0 2px rgba(0,0,0,0.035)"></div>
<div class="abs" style="left:1021.2px;top:470.5px;width:1.6px;height:1.6px;border-radius:50%;background:#4a4a4a"></div>
<div class="abs" style="left:1021.2px;top:474.2px;width:1.6px;height:1.6px;border-radius:50%;background:#4a4a4a"></div>
<div class="abs" style="left:1021.2px;top:477.9px;width:1.6px;height:1.6px;border-radius:50%;background:#4a4a4a"></div>
<div class="abs" style="left:235.0px;top:490.0px;width:860.0px;height:1.0px;background:#f0f0f0;"></div>
<div class="t" style="left:249.7px;top:501.16px;font-size:9.2px;font-weight:400;color:#6e6e6e;">10/11/2025</div>
<div class="t" style="left:360.4px;top:501.33px;font-size:9.0px;font-weight:400;color:#6e6e6e;">User</div>
<div class="abs" style="left:480.0px;top:500.3px;width:28.5px;height:11.6px;background:#fdecdc;border-radius:3px"></div>
<div class="t" style="left:486.9px;top:502.62px;font-size:7.6px;font-weight:700;color:#ec9a40;letter-spacing:0.25px">TRX</div>
<div class="t" style="left:575.5px;top:500.95px;font-size:9.45px;font-weight:400;color:#6e6e6e;">$500,00</div>
<svg class="abs" style="left:739.8px;top:501.34999999999997px" width="6" height="10" viewBox="0 0 6 10" fill="none" stroke="#1f9e33" stroke-width="0.8" stroke-linecap="round" stroke-linejoin="round"><path d="M3 8.6 V1.6 M1.6 3.2 L3 1.5 L4.4 3.2" stroke-width="0.85"/></svg>
<div class="t" style="left:748.0px;top:500.82px;font-size:9.6px;font-weight:400;color:#1f9e33;">$500,00</div>
<div class="abs" style="left:884.3px;top:498.2px;width:61.5px;height:14.5px;background:#d9f0e2;border-radius:3px"></div>
<div class="t" style="left:890.4px;top:502.08px;font-size:8.0px;font-weight:400;color:#34a065;-webkit-text-stroke:0.3px #34a065;letter-spacing:0.05px">COMPLETED</div>
<div class="abs" style="left:1011px;top:495.1px;width:22px;height:22px;border-radius:50%;background:#fff;box-shadow:0 0 2px rgba(0,0,0,0.035)"></div>
<div class="abs" style="left:1021.2px;top:501.4px;width:1.6px;height:1.6px;border-radius:50%;background:#4a4a4a"></div>
<div class="abs" style="left:1021.2px;top:505.1px;width:1.6px;height:1.6px;border-radius:50%;background:#4a4a4a"></div>
<div class="abs" style="left:1021.2px;top:508.8px;width:1.6px;height:1.6px;border-radius:50%;background:#4a4a4a"></div>
<div class="abs" style="left:235.0px;top:521.0px;width:860.0px;height:1.0px;background:#f0f0f0;"></div>
<div class="t" style="left:249.7px;top:532.06px;font-size:9.2px;font-weight:400;color:#6e6e6e;">25/10/2025</div>
<div class="t" style="left:360.4px;top:532.23px;font-size:9.0px;font-weight:400;color:#6e6e6e;">User</div>
<div class="abs" style="left:480.0px;top:531.2px;width:28.5px;height:11.6px;background:#fdecdc;border-radius:3px"></div>
<div class="t" style="left:486.9px;top:533.52px;font-size:7.6px;font-weight:700;color:#ec9a40;letter-spacing:0.25px">POL</div>
<div class="t" style="left:575.5px;top:531.85px;font-size:9.45px;font-weight:400;color:#6e6e6e;">$5.000,00</div>
<svg class="abs" style="left:739.8px;top:532.25px" width="6" height="10" viewBox="0 0 6 10" fill="none" stroke="#1f9e33" stroke-width="0.8" stroke-linecap="round" stroke-linejoin="round"><path d="M3 8.6 V1.6 M1.6 3.2 L3 1.5 L4.4 3.2" stroke-width="0.85"/></svg>
<div class="t" style="left:748.0px;top:531.72px;font-size:9.6px;font-weight:400;color:#1f9e33;">$5.000,00</div>
<div class="abs" style="left:884.3px;top:529.1px;width:61.5px;height:14.5px;background:#d9f0e2;border-radius:3px"></div>
<div class="t" style="left:890.4px;top:532.98px;font-size:8.0px;font-weight:400;color:#34a065;-webkit-text-stroke:0.3px #34a065;letter-spacing:0.05px">COMPLETED</div>
<div class="abs" style="left:1011px;top:526.0px;width:22px;height:22px;border-radius:50%;background:#fff;box-shadow:0 0 2px rgba(0,0,0,0.035)"></div>
<div class="abs" style="left:1021.2px;top:532.3px;width:1.6px;height:1.6px;border-radius:50%;background:#4a4a4a"></div>
<div class="abs" style="left:1021.2px;top:536.0px;width:1.6px;height:1.6px;border-radius:50%;background:#4a4a4a"></div>
<div class="abs" style="left:1021.2px;top:539.7px;width:1.6px;height:1.6px;border-radius:50%;background:#4a4a4a"></div>
<div class="t" style="left:777.6px;top:573.66px;font-size:9.5px;font-weight:400;color:#6a6a6a;">Items per page</div>
<div class="abs" style="left:847.5px;top:569px;width:55px;height:18.5px;border:1px solid #e6e6e6;border-radius:4px;background:#fff"></div>
<div class="t" style="left:856.6px;top:573.72px;font-size:8.6px;font-weight:400;color:#3a3a3a;">10</div>
<svg class="abs" style="left:886.5px;top:575px" width="7" height="5" viewBox="0 0 7 5" fill="none" stroke="#555" stroke-width="0.8" stroke-linecap="round" stroke-linejoin="round"><path d="M1.2 1.2 L3.5 3.4 L5.8 1.2" stroke-width="0.8"/></svg>
<div class="t" style="left:925.4px;top:574.46px;font-size:8.55px;font-weight:400;color:#5e5e5e;">1-10 of 15</div>
<svg class="abs" style="left:992.3px;top:574px" width="10" height="10" viewBox="0 0 10 10" fill="none" stroke="#9a9a9a" stroke-width="0.8" stroke-linecap="round" stroke-linejoin="round"><path d="M1 1 V8.6" /><path d="M9 1 L3 4.8 L9 8.6 Z"/></svg>
<svg class="abs" style="left:1022px;top:574px" width="6" height="10" viewBox="0 0 6 10" fill="none" stroke="#aaa" stroke-width="0.8" stroke-linecap="round" stroke-linejoin="round"><path d="M4.6 1 L1 4.8 L4.6 8.6"/></svg>
<svg class="abs" style="left:1049px;top:574px" width="6" height="10" viewBox="0 0 6 10" fill="none" stroke="#8a8a8a" stroke-width="0.8" stroke-linecap="round" stroke-linejoin="round"><path d="M1 1 L4.6 4.8 L1 8.6"/></svg>
<svg class="abs" style="left:1073.6px;top:574px" width="10" height="10" viewBox="0 0 10 10" fill="none" stroke="#8a8a8a" stroke-width="0.8" stroke-linecap="round" stroke-linejoin="round"><path d="M9 1 V8.6"/><path d="M1 1 L7 4.8 L1 8.6 Z"/></svg>
<div class="abs" style="left:1134px;top:560px;width:24px;height:24px;border-radius:50%;background:#f6c614"></div>
<svg class="abs" style="left:1140px;top:566px" width="12" height="12" viewBox="0 0 12 12" fill="none" stroke="#1b1b1b" stroke-width="0.8" stroke-linecap="round" stroke-linejoin="round"><path d="M6 10.4 V2 M2.4 5.4 L6 1.8 L9.6 5.4" stroke-width="1.4"/></svg>

</body></html>
